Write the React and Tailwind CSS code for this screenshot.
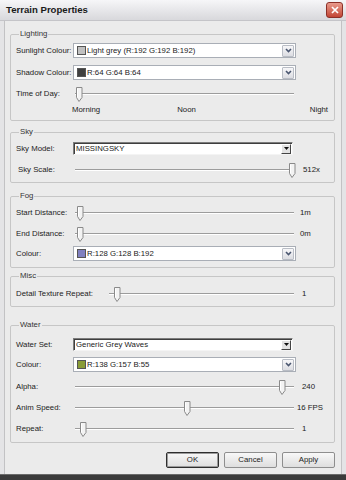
import React from 'react';

function Thumb() {
  return (
    <svg width="7" height="15" viewBox="0 0 7 15">
      <path d="M0.5 0.5h5.5v10l-3 4l-2.5-4z" fill="#f3f3f3" stroke="#8a8a8a" />
      <path d="M1.5 1.5v8.5" stroke="#ffffff" />
    </svg>
  );
}

function Slider({ width, pos, value, valueClass }) {
  return (
    <div className="flex items-center">
      <div className="relative flex h-[16px] items-center" style={{ width }}>
        <div className="ml-[2px] mr-[2px] h-[2px] flex-1 border-t border-t-[#9c9c9c] border-b border-b-white" />
        <div className="absolute top-[1px]" style={{ left: pos }}>
          <Thumb />
        </div>
      </div>
      {value && <span className={valueClass}>{value}</span>}
    </div>
  );
}

function ColourCombo({ swatch, text }) {
  return (
    <div className="flex h-[15px] w-[223px] items-center border border-[#a9aeb6] bg-white pl-[3px] pr-[1px]">
      <span className={`mr-[1px] h-[9px] w-[9px] shrink-0 border border-[#555] ${swatch}`} />
      <span className="flex-1 truncate">{text}</span>
      <span className="flex h-[12px] w-[12px] items-center justify-center rounded-[1px] border border-[#b9bdc5] bg-gradient-to-b from-[#f7f7f9] to-[#dcdde2]">
        <svg width="7" height="5" viewBox="0 0 7 5">
          <path d="M1 1l2.5 2.5L6 1" fill="none" stroke="#4a5670" strokeWidth="1.6" />
        </svg>
      </span>
    </div>
  );
}

function ClassicCombo({ text }) {
  return (
    <div className="flex h-[13px] w-[220px] items-center border border-t-[#7c7c7c] border-l-[#7c7c7c] border-r-[#f4f4f4] border-b-[#f4f4f4] bg-white pl-[2px] shadow-[inset_1px_1px_0_#3e3e3e]">
      <span className="flex-1 truncate">{text}</span>
      <span className="mr-[1px] flex h-[10px] w-[10px] items-center justify-center border border-t-white border-l-white border-r-[#444] border-b-[#444] bg-[#e2e2e2]">
        <svg width="5" height="3" viewBox="0 0 5 3">
          <polygon points="0,0 5,0 2.5,3" fill="#111" />
        </svg>
      </span>
    </div>
  );
}

function Row({ label, labelWidth = 57, className = '', labelClass = '', children }) {
  return (
    <div className={`flex items-center ${className}`}>
      <div className={`shrink-0 ${labelClass}`} style={{ width: labelWidth }}>{label}</div>
      {children}
    </div>
  );
}

function Group({ title, className = '', children }) {
  return (
    <fieldset className={`mr-[6px] ml-[5px] rounded-[2px] border border-[#c6c6c6] px-[5px] ${className}`}>
      <legend className="ml-[3px] px-[1px] leading-[10px] text-[#333]">{title}</legend>
      {children}
    </fieldset>
  );
}

export default function App() {
  return (
    <div className="h-[480px] w-[346px] bg-[#3b3b3b] font-['Liberation_Sans',Arial,sans-serif] text-[7.8px] text-[#222]">
      <div className="flex h-[475px] w-[346px] flex-col border-b border-[#6a6a6a] bg-[#e4e4e6]">
        {/* title bar */}
        <div className="flex h-[21px] shrink-0 items-center justify-between border-b border-[#c4c4c8] bg-gradient-to-b from-[#f6f6f8] to-[#d8d8dc] pl-[6px] pr-[3px]">
          <span className="text-[9.6px] font-bold text-[#1a1a1a]">Terrain Properties</span>
          <span className="flex h-[16px] w-[17px] items-center justify-center rounded-[3px] border border-[#8c3028] bg-gradient-to-b from-[#e89a8c] to-[#c24434]">
            <svg width="8" height="8" viewBox="0 0 8 8">
              <path d="M1 1l6 6M7 1l-6 6" stroke="#fff" strokeWidth="1.7" />
            </svg>
          </span>
        </div>

        {/* body */}
        <div className="mx-[4px] flex flex-1 flex-col border-x border-[#c2c2c4] bg-[#ebebeb] pt-[8px]">
          <Group title="Lighting" className="pt-[4px] pb-[4px]">
            <Row label="Sunlight Colour:">
              <ColourCombo swatch="bg-[#c0c0c0]" text="Light grey (R:192 G:192 B:192)" />
            </Row>
            <Row label="Shadow Colour:" className="mt-[7px]">
              <ColourCombo swatch="bg-[#404040]" text="R:64 G:64 B:64" />
            </Row>
            <Row label="Time of Day:" className="mt-[6px]">
              <Slider width={223} pos={3} />
            </Row>
            <div className="mt-[2px] flex h-[12px] items-end pl-[56px]">
              <span>Morning</span>
              <span className="ml-[77px]">Noon</span>
              <span className="ml-auto mr-[1px]">Night</span>
            </div>
          </Group>

          <Group title="Sky" className="mt-[6px] pt-[5px] pb-[4px]">
            <Row label="Sky Model:">
              <ClassicCombo text="MISSINGSKY" />
            </Row>
            <Row label="Sky Scale:" labelClass="pl-[2px]" className="mt-[7px]">
              <Slider width={223} pos={216} value="512x" valueClass="ml-[7px]" />
            </Row>
          </Group>

          <Group title="Fog" className="mt-[8px] pt-[4px] pb-[6px]">
            <Row label="Start Distance:">
              <Slider width={223} pos={4} value="1m" valueClass="ml-[4px]" />
            </Row>
            <Row label="End Distance:" className="mt-[5px]">
              <Slider width={223} pos={4} value="0m" valueClass="ml-[4px]" />
            </Row>
            <Row label="Colour:" className="mt-[4px]">
              <ColourCombo swatch="bg-[#8080c0]" text="R:128 G:128 B:192" />
            </Row>
          </Group>

          <Group title="Misc" className="mt-[3px] pt-[5px] pb-[4px]">
            <Row label="Detail Texture Repeat:" labelWidth={91}>
              <Slider width={189} pos={7} value="1" valueClass="ml-[6px]" />
            </Row>
          </Group>

          <Group title="Water" className="mt-[13px] pt-[8px] pb-[5px]">
            <Row label="Water Set:">
              <ClassicCombo text="Generic Grey Waves" />
            </Row>
            <Row label="Colour:" className="mt-[6px]">
              <ColourCombo swatch="bg-[#8a9d37]" text="R:138 G:157 B:55" />
            </Row>
            <Row label="Alpha:" className="mt-[7px]">
              <Slider width={223} pos={206} value="240" valueClass="ml-[6px]" />
            </Row>
            <Row label="Anim Speed:" className="mt-[5px]">
              <Slider width={223} pos={111} value="16 FPS" valueClass="ml-[1px]" />
            </Row>
            <Row label="Repeat:" className="mt-[5px]">
              <Slider width={223} pos={7} value="1" valueClass="ml-[6px]" />
            </Row>
          </Group>

          <div className="mt-[9px] mr-[6px] flex justify-end gap-[5px]">
            <button className="h-[16px] w-[53px] rounded-[2px] border border-[#2e2e2e] bg-gradient-to-b from-[#f8f8f8] to-[#dedede] shadow-[inset_0_0_0_1px_#9a9a9a]">OK</button>
            <button className="h-[16px] w-[53px] rounded-[2px] border border-[#8e8e8e] bg-gradient-to-b from-[#f8f8f8] to-[#dedede]">Cancel</button>
            <button className="h-[16px] w-[53px] rounded-[2px] border border-[#8e8e8e] bg-gradient-to-b from-[#f8f8f8] to-[#dedede]">Apply</button>
          </div>
        </div>
      </div>
    </div>
  );
}
